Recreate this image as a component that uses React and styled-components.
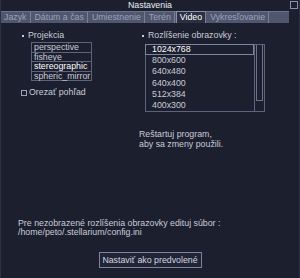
import React from "react";
import styled, { createGlobalStyle } from "styled-components";

const Global = createGlobalStyle`
  html, body { margin: 0; padding: 0; background: #1c1f2d; }
  body { font-family: "Liberation Sans", Arial, sans-serif; }
`;

const Window = styled.div`
  width: 300px;
  height: 278px;
  box-sizing: border-box;
  background: #1c1f2d;
  border-left: 1px solid #2c3044;
  border-right: 1px solid #2c3044;
  display: flex;
  flex-direction: column;
  color: #c9ccd8;
  font-size: 8.8px;
`;

const TitleBar = styled.div`
  height: 11px;
  display: grid;
  grid-template-columns: 1fr auto 1fr;
  align-items: center;
`;

const Title = styled.div`
  grid-column: 2;
  color: #eceef4;
  line-height: 11px;
`;

const CloseBox = styled.div`
  justify-self: end;
  width: 6px;
  height: 6px;
  margin-right: 1px;
  margin-top: -2px;
  border: 1px solid #8a90a8;
`;

const TabBar = styled.div`
  height: 12px;
  margin-right: 10px;
  box-sizing: border-box;
  background: #50566e;
  border-top: 1px solid #6c728c;
  display: flex;
`;

const Tab = styled.div`
  padding: 0 3px;
  line-height: 11px;
  margin-right: 1px;
  border-right: 1px solid #7a809c;
  color: ${(p) => (p.$active ? "#ffffff" : "#9ba1bb")};
  background: ${(p) => (p.$active ? "#2b3042" : "transparent")};
  ${(p) => (p.$active ? "border-left: 1px solid #8a90aa; margin-top: -1px; border-top: 1px solid #8a90aa;" : "")}
`;

const Content = styled.div`
  display: grid;
  grid-template-columns: 118px 1fr;
  padding: 8px 0 0 20px;
`;

const Column = styled.div`
  display: flex;
  flex-direction: column;
  align-items: flex-start;
`;

const Label = styled.div`
  display: flex;
  align-items: center;
  line-height: 9px;
  padding-left: ${(p) => p.$indent || 0}px;
  &::before {
    content: "";
    width: 2px;
    height: 2px;
    background: #c9ccd8;
    margin: 0 4px 0 1px;
  }
`;

const ProjList = styled.div`
  margin: 2px 0 0 10px;
  width: 61px;
  display: flex;
  flex-direction: column;
`;

const ProjItem = styled.div`
  box-sizing: border-box;
  height: 10.6px;
  line-height: 9px;
  padding-left: 2px;
  border: 1px solid #5d637c;
  margin-top: -1px;
  color: ${(p) => (p.$active ? "#ffffff" : "#c9ccd8")};
  &:first-child { margin-top: 0; }
`;

const CheckRow = styled.div`
  margin-top: 7px;
  display: flex;
  align-items: center;
  line-height: 9px;
`;

const CheckBox = styled.span`
  width: 4px;
  height: 4px;
  border: 1px solid #9da2b8;
  margin-right: 2px;
`;

const ListBox = styled.div`
  margin: 4px 0 0 6px;
  width: 120px;
  height: 68px;
  box-sizing: border-box;
  border: 1px solid #5d637c;
  display: flex;
`;

const Items = styled.div`
  flex: 1;
  margin-top: -1px;
  margin-left: -1px;
  display: flex;
  flex-direction: column;
`;

const Item = styled.div`
  box-sizing: border-box;
  height: 11.4px;
  line-height: 8px;
  padding-left: 6px;
  border: 1px solid ${(p) => (p.$active ? "#7d84a0" : "transparent")};
  color: ${(p) => (p.$active ? "#ffffff" : "#c9ccd8")};
`;

const ScrollTrack = styled.div`
  width: 9px;
  border-left: 1px solid #5d637c;
  display: flex;
  flex-direction: column;
`;

const Thumb = styled.div`
  margin: 0 1px 0 1px;
  height: 55px;
  border: 1px solid #6d738c;
  border-top: none;
`;

const Note = styled.div`
  margin-top: 18px;
  line-height: 9.5px;
`;

const Spacer = styled.div`
  flex: 1;
`;

const Footer = styled.div`
  display: flex;
  flex-direction: column;
  padding: 0 0 10px 17px;
`;

const Info = styled.div`
  line-height: 9px;
`;

const Button = styled.div`
  align-self: center;
  margin: 15px 0 0 -17px;
  width: 103px;
  height: 16px;
  box-sizing: border-box;
  border: 1px solid #7d839c;
  background: #202435;
  color: #d4d7e2;
  text-align: center;
  line-height: 14px;
`;

const tabs = ["Jazyk", "Dátum a čas", "Umiestnenie", "Terén", "Video", "Vykresľovanie"];
const projections = ["perspective", "fisheye", "stereographic", "spheric_mirror"];
const resolutions = ["1024x768", "800x600", "640x480", "640x400", "512x384", "400x300"];

export default function App() {
  return (
    <>
      <Global />
      <Window>
        <TitleBar>
          <Title>Nastavenia</Title>
          <CloseBox />
        </TitleBar>
        <TabBar>
          {tabs.map((t) => (
            <Tab key={t} $active={t === "Video"}>{t}</Tab>
          ))}
        </TabBar>
        <Content>
          <Column>
            <Label>Projekcia</Label>
            <ProjList>
              {projections.map((p) => (
                <ProjItem key={p} $active={p === "stereographic"}>{p}</ProjItem>
              ))}
            </ProjList>
            <CheckRow>
              <CheckBox />
              Orezať pohľad
            </CheckRow>
          </Column>
          <Column>
            <Label $indent={2}>Rozlíšenie obrazovky :</Label>
            <ListBox>
              <Items>
                {resolutions.map((r, i) => (
                  <Item key={r} $active={i === 0}>{r}</Item>
                ))}
              </Items>
              <ScrollTrack>
                <Thumb />
              </ScrollTrack>
            </ListBox>
            <Note>
              Reštartuj program,
              <br />
              aby sa zmeny použili.
            </Note>
          </Column>
        </Content>
        <Spacer />
        <Footer>
          <Info>
            Pre nezobrazené rozlíšenia obrazovky edituj súbor :
            <br />
            /home/peto/.stellarium/config.ini
          </Info>
          <Button>Nastaviť ako predvolené</Button>
        </Footer>
      </Window>
    </>
  );
}
